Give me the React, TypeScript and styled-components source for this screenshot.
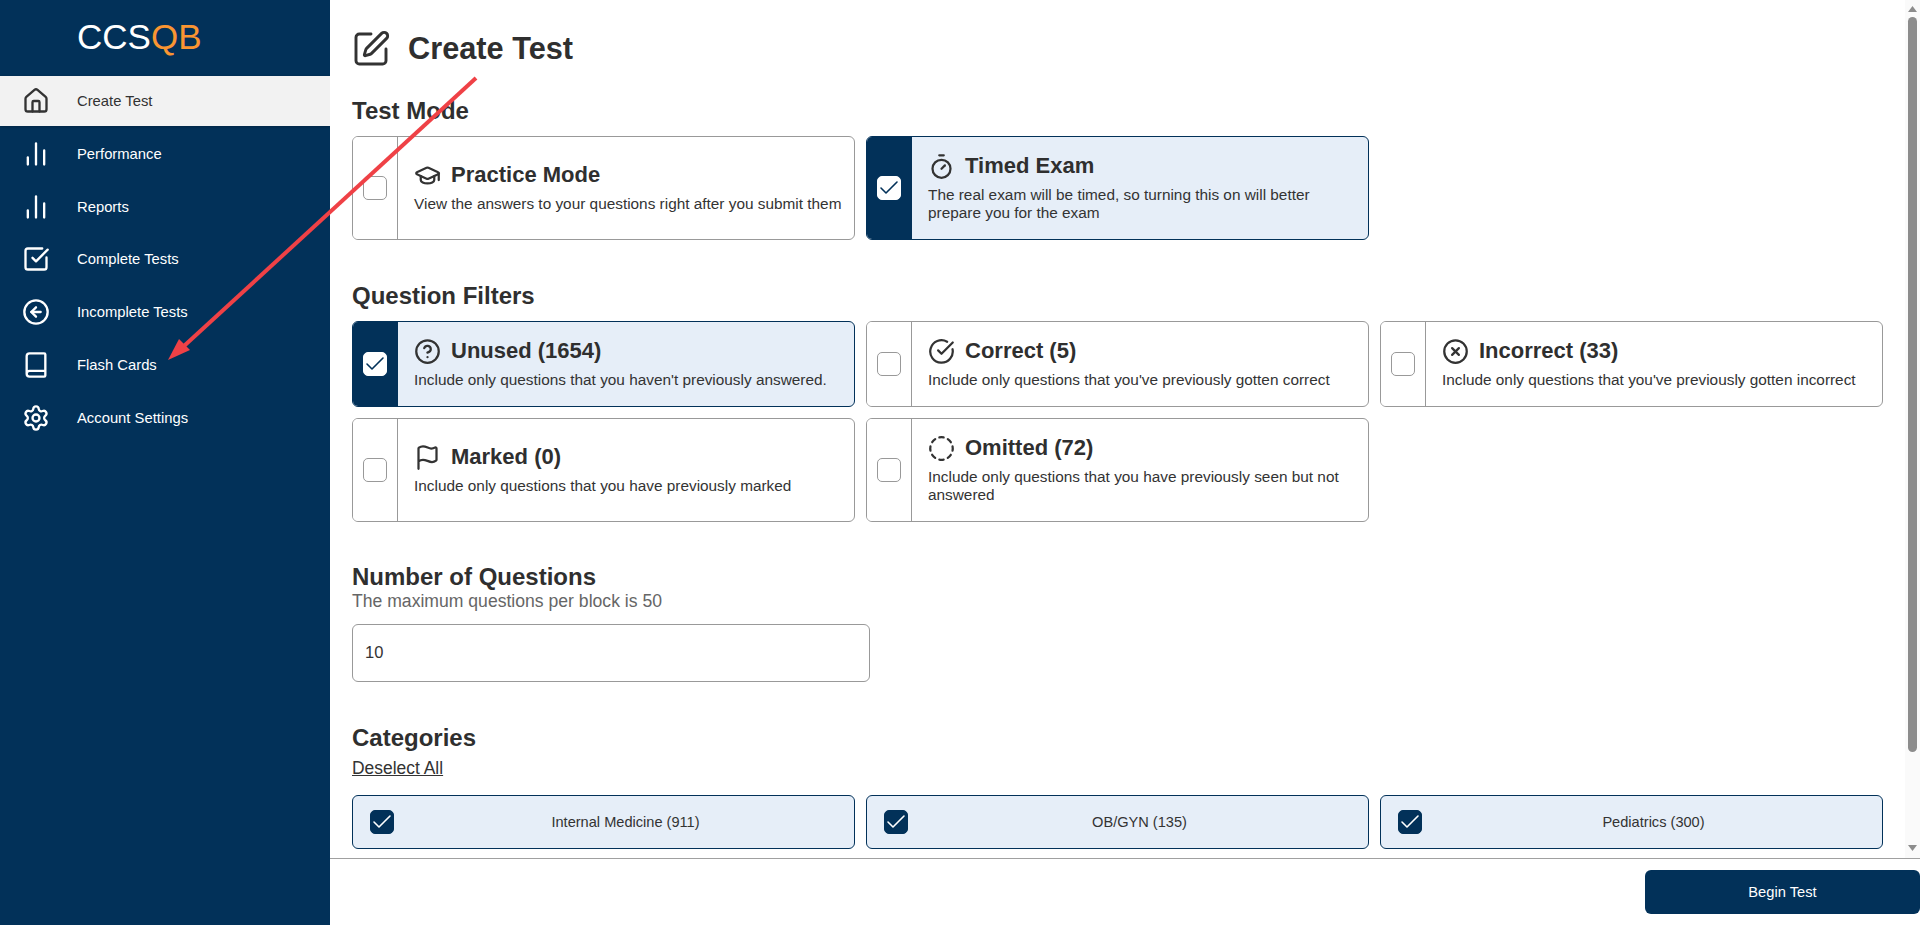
import React from "react";
import styled, { createGlobalStyle } from "styled-components";
import {
  Book,
  ChartNoAxesColumn,
  Check,
  CircleArrowLeft,
  CircleCheckBig,
  CircleDashed,
  CircleHelp,
  CircleX,
  Flag,
  GraduationCap,
  House,
  Settings,
  SquareCheckBig,
  SquarePen,
  Timer,
  LucideIcon,
} from "lucide-react";

const navy = "#023159";
const selectedBg = "#e6eef8";
const borderGrey = "#999999";
const textDark = "#2f2f2f";

const GlobalStyle = createGlobalStyle`
  html, body {
    margin: 0;
    padding: 0;
    height: 100%;
    overflow: hidden;
    font-family: "Liberation Sans", Arial, sans-serif;
    color: ${textDark};
  }
  * {
    box-sizing: border-box;
  }
`;

const Page = styled.div`
  position: relative;
  display: flex;
  width: 100%;
  height: 100vh;
  background: ${navy};
`;

const Sidebar = styled.aside`
  flex: 0 0 330px;
  display: flex;
  flex-direction: column;
  background: ${navy};
`;

const Logo = styled.div`
  height: 76px;
  padding: 17px 0 0 77px;
  font-size: 35px;
  line-height: 40px;
  color: #ffffff;
`;

const LogoAccent = styled.span`
  color: #f99532;
`;

const NavList = styled.nav`
  display: flex;
  flex-direction: column;
  gap: 2.8px;
`;

const NavItem = styled.div<{ $active?: boolean }>`
  display: flex;
  align-items: center;
  gap: 27px;
  height: 50px;
  padding-left: 22px;
  font-size: 14.8px;
  color: ${(p) => (p.$active ? "#333333" : "#ffffff")};
  background: ${(p) => (p.$active ? "#f2f2f2" : "transparent")};
  box-shadow: ${(p) => (p.$active ? "0 1px 3px rgba(0, 0, 0, 0.25)" : "none")};
`;

const Main = styled.main`
  flex: 1;
  min-width: 0;
  display: flex;
  flex-direction: column;
  background: #ffffff;
`;

const ScrollFrame = styled.div`
  flex: 1;
  min-height: 0;
  display: flex;
`;

const ScrollArea = styled.div`
  flex: 1;
  min-width: 0;
  overflow: hidden;
  padding: 29px 0 0 22px;
  background: #ffffff;
`;

const ScrollRail = styled.div`
  flex: 0 0 15px;
  display: flex;
  flex-direction: column;
  align-items: center;
  padding: 6px 0 7px;
  background: #fafafa;
`;

const RailThumb = styled.div`
  width: 9px;
  height: 735px;
  margin-top: 5px;
  border-radius: 5px;
  background: #8c8c8c;
`;

const RailArrow = styled.svg<{ $bottom?: boolean }>`
  flex: none;
  width: 9px;
  height: 6px;
  margin-top: ${(p) => (p.$bottom ? "auto" : "0")};
`;

const PageHeader = styled.header`
  display: flex;
  align-items: center;
  gap: 17px;
  height: 40px;
  margin-bottom: 28px;

  svg {
    margin-left: -1px;
  }
`;

const PageTitle = styled.h1`
  margin: 0;
  font-size: 30.72px;
  line-height: 40px;
  font-weight: 700;
`;

const Section = styled.section`
  margin-bottom: 42px;
`;

const SectionTitle = styled.h2<{ $tight?: boolean }>`
  margin: 0 0 ${(p) => (p.$tight ? "2px" : "11px")};
  font-size: 24px;
  line-height: ${(p) => (p.$tight ? "26px" : "28px")};
  font-weight: 700;
`;

const SectionHint = styled.div`
  margin-bottom: 14px;
  font-size: 17.6px;
  line-height: 18px;
  color: #666666;
`;

const CardGrid = styled.div`
  display: grid;
  grid-template-columns: repeat(3, 503px);
  gap: 11px;
`;

const OptionCard = styled.div<{ $selected?: boolean }>`
  display: flex;
  overflow: hidden;
  border: 1px solid ${(p) => (p.$selected ? navy : borderGrey)};
  border-radius: 6px;
  background: ${(p) => (p.$selected ? selectedBg : "#ffffff")};
`;

const CheckColumn = styled.div<{ $selected?: boolean }>`
  flex: 0 0 45px;
  display: flex;
  align-items: center;
  justify-content: center;
  background: ${(p) => (p.$selected ? navy : "#ffffff")};
  border-right: 1px solid ${(p) => (p.$selected ? navy : borderGrey)};
`;

const CheckBox = styled.span<{ $checked?: boolean; $filled?: boolean }>`
  flex: none;
  display: flex;
  align-items: center;
  justify-content: center;
  width: 24px;
  height: 24px;
  border-radius: 5px;
  border: 1px solid ${(p) => (p.$filled ? navy : p.$checked ? "#ffffff" : borderGrey)};
  background: ${(p) => (p.$filled ? navy : "#ffffff")};
  color: ${(p) => (p.$filled ? "#ffffff" : navy)};

  svg {
    flex: none;
  }
`;

const CardBody = styled.div`
  flex: 1;
  min-width: 0;
  display: flex;
  flex-direction: column;
  justify-content: center;
  padding: 15px 6px 17px 16px;
`;

const CardTitle = styled.div`
  display: flex;
  align-items: center;
  gap: 10px;
  height: 28px;
  margin-bottom: 6px;
  font-size: 22px;
  font-weight: 700;
`;

const CardText = styled.div`
  font-size: 15.36px;
  line-height: 18px;
  color: #333333;
`;

const NumberInput = styled.input`
  display: block;
  width: 518px;
  height: 58px;
  padding: 0 12px 2px;
  border: 1px solid ${borderGrey};
  border-radius: 6px;
  font-family: inherit;
  font-size: 16.5px;
  color: #333333;
  background: #ffffff;
  outline: none;
`;

const DeselectLink = styled.a`
  display: block;
  margin: -4px 0 18px;
  font-size: 17.44px;
  line-height: 18px;
  color: #333333;
  text-decoration: underline;
`;

const CategoryCard = styled.div`
  display: flex;
  align-items: center;
  height: 54px;
  padding-left: 17px;
  border: 1px solid ${navy};
  border-radius: 6px;
  background: ${selectedBg};
`;

const CategoryLabel = styled.span`
  flex: 1;
  padding-left: 3px;
  text-align: center;
  font-size: 14.6px;
  color: #333333;
`;

const Footer = styled.footer`
  flex: 0 0 67px;
  display: flex;
  justify-content: flex-end;
  padding-top: 11px;
  border-top: 1px solid #a0a0a0;
  background: #ffffff;
`;

const BeginButton = styled.button`
  width: 275px;
  height: 44px;
  border: none;
  border-radius: 6px;
  background: ${navy};
  color: #ffffff;
  font-family: inherit;
  font-size: 14.7px;
`;

const ArrowOverlay = styled.svg`
  position: absolute;
  top: 0;
  left: 0;
  width: 100%;
  height: 100%;
  pointer-events: none;
`;

const navItems: { label: string; icon: LucideIcon; active?: boolean }[] = [
  { label: "Create Test", icon: House, active: true },
  { label: "Performance", icon: ChartNoAxesColumn },
  { label: "Reports", icon: ChartNoAxesColumn },
  { label: "Complete Tests", icon: SquareCheckBig },
  { label: "Incomplete Tests", icon: CircleArrowLeft },
  { label: "Flash Cards", icon: Book },
  { label: "Account Settings", icon: Settings },
];

interface Option {
  title: string;
  text: string;
  icon: LucideIcon;
  selected?: boolean;
}

const modes: Option[] = [
  {
    title: "Practice Mode",
    text: "View the answers to your questions right after you submit them",
    icon: GraduationCap,
  },
  {
    title: "Timed Exam",
    text: "The real exam will be timed, so turning this on will better prepare you for the exam",
    icon: Timer,
    selected: true,
  },
];

const filters: Option[] = [
  {
    title: "Unused (1654)",
    text: "Include only questions that you haven't previously answered.",
    icon: CircleHelp,
    selected: true,
  },
  {
    title: "Correct (5)",
    text: "Include only questions that you've previously gotten correct",
    icon: CircleCheckBig,
  },
  {
    title: "Incorrect (33)",
    text: "Include only questions that you've previously gotten incorrect",
    icon: CircleX,
  },
  {
    title: "Marked (0)",
    text: "Include only questions that you have previously marked",
    icon: Flag,
  },
  {
    title: "Omitted (72)",
    text: "Include only questions that you have previously seen but not answered",
    icon: CircleDashed,
  },
];

const categories = ["Internal Medicine (911)", "OB/GYN (135)", "Pediatrics (300)"];

const OptionTile = ({ option }: { option: Option }) => {
  const Icon = option.icon;
  return (
    <OptionCard $selected={option.selected}>
      <CheckColumn $selected={option.selected}>
        <CheckBox $checked={option.selected}>
          {option.selected && <Check size={24} strokeWidth={1.6} />}
        </CheckBox>
      </CheckColumn>
      <CardBody>
        <CardTitle>
          <Icon size={27} strokeWidth={2} color="#333333" />
          {option.title}
        </CardTitle>
        <CardText>{option.text}</CardText>
      </CardBody>
    </OptionCard>
  );
};

const App: React.FC = () => {
  return (
    <Page>
      <GlobalStyle />
      <Sidebar>
        <Logo>
          CCS<LogoAccent>QB</LogoAccent>
        </Logo>
        <NavList>
          {navItems.map((item) => {
            const Icon = item.icon;
            return (
              <NavItem key={item.label} $active={item.active}>
                <Icon size={28} strokeWidth={2} />
                {item.label}
              </NavItem>
            );
          })}
        </NavList>
      </Sidebar>
      <Main>
        <ScrollFrame>
          <ScrollArea>
            <PageHeader>
              <SquarePen size={40} strokeWidth={1.75} color="#333333" />
              <PageTitle>Create Test</PageTitle>
            </PageHeader>
            <Section>
              <SectionTitle>Test Mode</SectionTitle>
              <CardGrid>
                {modes.map((mode) => (
                  <OptionTile key={mode.title} option={mode} />
                ))}
              </CardGrid>
            </Section>
            <Section>
              <SectionTitle>Question Filters</SectionTitle>
              <CardGrid>
                {filters.map((filter) => (
                  <OptionTile key={filter.title} option={filter} />
                ))}
              </CardGrid>
            </Section>
            <Section>
              <SectionTitle $tight>Number of Questions</SectionTitle>
              <SectionHint>The maximum questions per block is 50</SectionHint>
              <NumberInput defaultValue="10" />
            </Section>
            <Section>
              <SectionTitle>Categories</SectionTitle>
              <DeselectLink>Deselect All</DeselectLink>
              <CardGrid>
                {categories.map((category) => (
                  <CategoryCard key={category}>
                    <CheckBox $checked $filled>
                      <Check size={24} strokeWidth={1.6} />
                    </CheckBox>
                    <CategoryLabel>{category}</CategoryLabel>
                  </CategoryCard>
                ))}
              </CardGrid>
            </Section>
          </ScrollArea>
          <ScrollRail>
            <RailArrow viewBox="0 0 9 6">
              <path d="M4.5 0L9 6H0z" fill="#8c8c8c" />
            </RailArrow>
            <RailThumb />
            <RailArrow $bottom viewBox="0 0 9 6">
              <path d="M4.5 6L9 0H0z" fill="#8c8c8c" />
            </RailArrow>
          </ScrollRail>
        </ScrollFrame>
        <Footer>
          <BeginButton>Begin Test</BeginButton>
        </Footer>
      </Main>
      <ArrowOverlay>
        <line x1="476" y1="78" x2="184" y2="346" stroke="#ef4146" strokeWidth="4" />
        <polygon points="168,360 179,339 190,350" fill="#ef4146" />
      </ArrowOverlay>
    </Page>
  );
};

export default App;
